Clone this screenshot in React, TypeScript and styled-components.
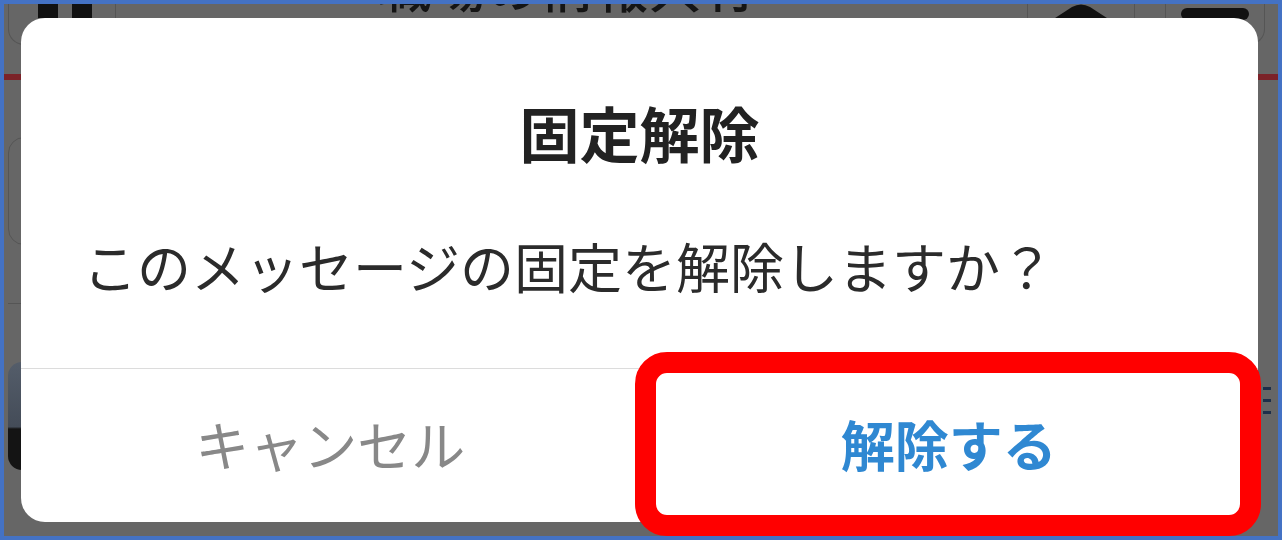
import React from "react";
import styled, { createGlobalStyle } from "styled-components";

const GlobalStyle = createGlobalStyle`
  html, body {
    margin: 0;
    padding: 0;
    background: #ffffff;
  }
  body {
    font-family: "Noto Sans CJK JP", "Noto Sans", sans-serif;
  }
  * { box-sizing: border-box; }
`;

const Frame = styled.div`
  position: relative;
  width: 1282px;
  height: 540px;
  border: 4px solid #4472c4;
  background: #666666;
  overflow: hidden;
`;

/* ---------- dimmed app behind the dialog ---------- */

const Header = styled.header`
  display: flex;
  align-items: flex-start;
  height: 70px;
  padding: 0 13px 0 4px;
`;

const HeaderButton = styled.div<{ $side: "left" | "right" }>`
  display: flex;
  justify-content: center;
  gap: 14px;
  width: ${(p) => (p.$side === "left" ? 108 : 100)}px;
  height: 41px;
  border: 1px solid #555555;
  border-top: none;
  border-radius: ${(p) =>
    p.$side === "left" ? "0 0 0 16px" : "0 0 16px 0"};
  padding-left: ${(p) => (p.$side === "left" ? 6 : 0)}px;
`;

const HeaderPlain = styled.div`
  display: flex;
  justify-content: center;
  width: 108px;
  height: 41px;
  border-left: 1px solid #555555;
  border-right: 1px solid #555555;
  margin-right: 30px;
`;

const Square = styled.span`
  width: 20px;
  height: 14px;
  background: #111111;
`;

const Bar = styled.span`
  margin-top: 4px;
  width: 68px;
  height: 12px;
  border-radius: 6px;
  background: #111111;
`;

const HeaderTitle = styled.h1`
  flex: 1;
  margin: -46px 0 0 0;
  padding-left: 262px;
  font-size: 54px;
  line-height: 54px;
  font-weight: 500;
  color: #151515;
  white-space: nowrap;
`;

const RedRule = styled.div`
  height: 6px;
  background: #7b2228;
`;

const Body = styled.div`
  display: flex;
  justify-content: space-between;
  padding: 0 3px 0 4px;
`;

const LeftColumn = styled.div`
  display: flex;
  flex-direction: column;
  width: 60px;
`;

const OutlineCard = styled.div`
  margin-top: 57px;
  height: 108px;
  border: 1px solid #555555;
  border-radius: 16px;
`;

const Separator = styled.div`
  margin-top: 58px;
  height: 1px;
  background: #555555;
`;

const Thumb = styled.div`
  margin-top: 58px;
  height: 108px;
  border-radius: 14px;
  background: linear-gradient(
    #545d6a 0%,
    #444c58 60%,
    #141414 62%,
    #141414 100%
  );
`;

const RightColumn = styled.div`
  display: flex;
  flex-direction: column;
  gap: 9px;
  width: 12px;
  padding-top: 307px;
`;

const Dash = styled.span`
  width: 8px;
  height: 3px;
  background: #1d2f4a;
`;

/* ---------- modal ---------- */

const Overlay = styled.div`
  position: absolute;
  inset: 0;
  display: flex;
  padding: 14px 20px 0 17px;
`;

const Dialog = styled.div`
  flex: 1;
  height: 504px;
  display: flex;
  flex-direction: column;
  background: #ffffff;
  border-radius: 24px;
  overflow: hidden;
`;

const Title = styled.h2`
  margin: 0;
  padding-top: 78px;
  font-size: 60px;
  line-height: 72px;
  font-weight: 700;
  color: #222222;
  text-align: center;
`;

const Message = styled.p`
  margin: 63px 0 0 0;
  padding-left: 62px;
  font-size: 54px;
  line-height: 70px;
  font-weight: 400;
  color: #2b2b2b;
  white-space: nowrap;
`;

const Actions = styled.div`
  margin-top: auto;
  display: grid;
  grid-template-columns: 1fr 1fr;
  height: 154px;
  border-top: 1px solid #dcdcdc;
`;

const ActionButton = styled.button<{ $primary?: boolean }>`
  display: flex;
  align-items: center;
  justify-content: center;
  padding: 0 0 4px 0;
  border: none;
  background: transparent;
  font-family: "Noto Sans CJK JP", "Noto Sans", sans-serif;
  font-size: 54px;
  line-height: 70px;
  font-weight: ${(p) => (p.$primary ? 700 : 400)};
  color: ${(p) => (p.$primary ? "#2f88d2" : "#888888")};
  cursor: pointer;
`;

/* ---------- annotation ---------- */

const Highlight = styled.div`
  position: absolute;
  left: 631px;
  top: 348px;
  width: 626px;
  height: 184px;
  border: 21px solid #ff0000;
  border-radius: 32px;
  pointer-events: none;
`;

export default function App() {
  return (
    <>
      <GlobalStyle />
      <Frame>
        <Header>
          <HeaderButton $side="left">
            <Square />
            <Square />
          </HeaderButton>
          <HeaderTitle>職場の情報共有</HeaderTitle>
          <HeaderPlain>
            <svg width="58" height="16" viewBox="0 0 58 16">
              <path
                d="M0 16 L20 3 Q29 -2 38 3 L58 16 Z"
                fill="#111"
              />
            </svg>
          </HeaderPlain>
          <HeaderButton $side="right">
            <Bar />
          </HeaderButton>
        </Header>
        <RedRule />
        <Body>
          <LeftColumn>
            <OutlineCard />
            <Separator />
            <Thumb />
          </LeftColumn>
          <RightColumn>
            <Dash />
            <Dash />
            <Dash />
          </RightColumn>
        </Body>

        <Overlay>
          <Dialog role="dialog" aria-modal="true">
            <Title>固定解除</Title>
            <Message>このメッセージの固定を解除しますか？</Message>
            <Actions>
              <ActionButton>キャンセル</ActionButton>
              <ActionButton $primary>解除する</ActionButton>
            </Actions>
          </Dialog>
        </Overlay>

        <Highlight />
      </Frame>
    </>
  );
}
